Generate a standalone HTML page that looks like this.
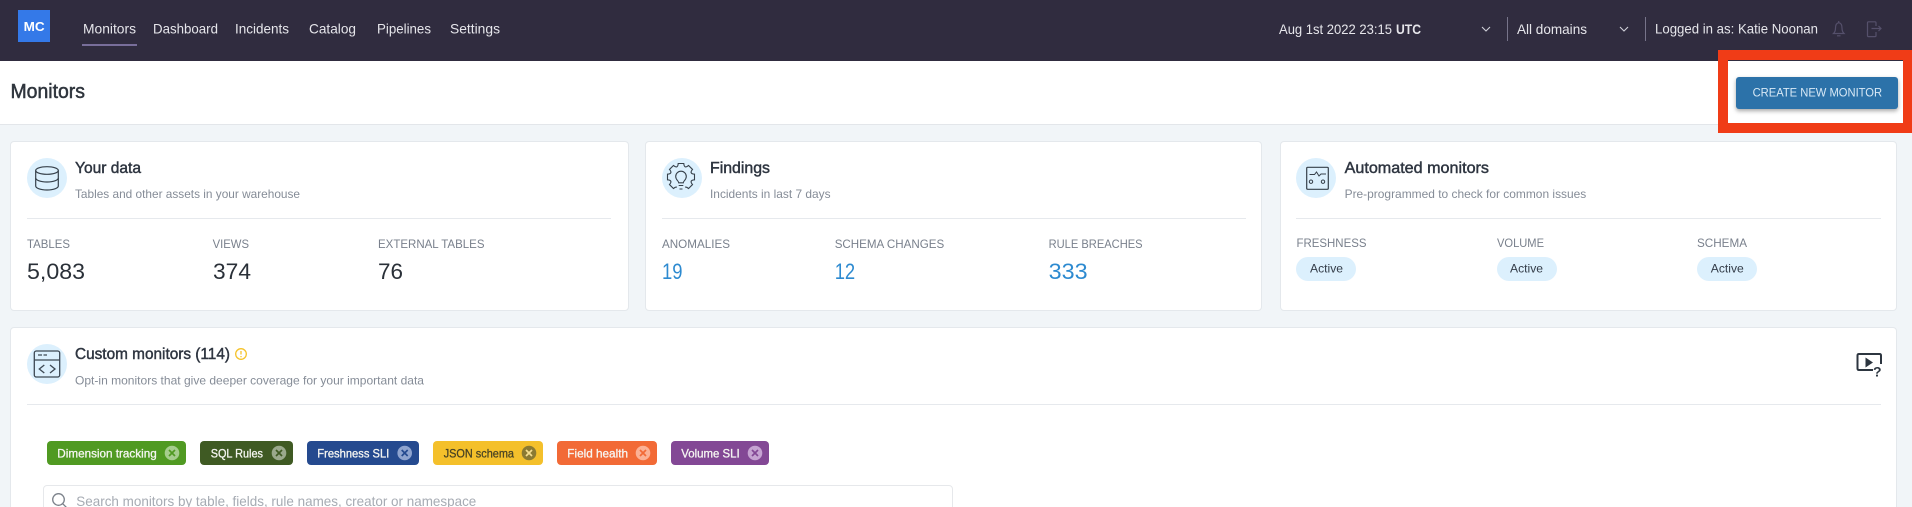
<!DOCTYPE html>
<html lang="en">
<head>
<meta charset="utf-8">
<title>Monitors</title>
<style>
html,body{margin:0;padding:0;width:1912px;height:507px;overflow:hidden;background:#f1f5f8;font-family:"Liberation Sans",sans-serif}
#w{position:relative;width:1912px;height:507px;overflow:hidden;background:#f1f5f8}
.a{position:absolute;box-sizing:border-box}
.card{background:#fff;border:1px solid #e4e8ec;border-radius:4px}
.line{background:#e6e9ed;height:1px}
.chip{border-radius:4px;height:24px;top:441px}
.pill{background:#dcf0fd;border-radius:12px;height:24px;width:60px;top:257px}
svg{position:absolute;left:0;top:0}
text{font-family:"Liberation Sans",sans-serif}
.nav{font-size:14px;fill:#e6e6eb}
.ttl{font-size:16px;fill:#2e3540;stroke:#2e3540;stroke-width:.45px}
.sub{font-size:12px;fill:#858c97}
.lbl{font-size:12px;fill:#79808c}
.val{font-size:22px;fill:#2a3038}
.blu{font-size:22px;fill:#2d8ad0}
.act{font-size:12px;fill:#333c48}
.chp{font-size:12px;fill:#f6f6f2;stroke:#f6f6f2;stroke-width:.3px}
</style>
</head>
<body>
<div id="w">
<div class="a" style="left:0;top:0;width:1912px;height:61px;background:#302c3f"></div>
<div class="a" style="left:18px;top:10px;width:32px;height:32px;background:#3479e8"></div>
<div class="a" style="left:82px;top:44px;width:55px;height:2px;background:#786e9a"></div>
<div class="a" style="left:1507px;top:17px;width:1px;height:24px;background:#77748a"></div>
<div class="a" style="left:1645px;top:17px;width:1px;height:24px;background:#77748a"></div>

<div class="a" style="left:0;top:61px;width:1912px;height:64px;background:#fff;border-bottom:1px solid #e3e6ea"></div>
<div class="a" style="left:1736px;top:77px;width:162px;height:32px;background:#2c72a9;border-radius:3px;box-shadow:0 2px 4px rgba(0,0,0,.35)"></div>
<div class="a" style="left:1718px;top:50px;width:194px;height:83px;border:solid #f03c17;border-width:10px 9px 10px 10px"></div>

<div class="a card" style="left:10px;top:141px;width:619px;height:170px"></div>
<div class="a card" style="left:645px;top:141px;width:617px;height:170px"></div>
<div class="a card" style="left:1280px;top:141px;width:617px;height:170px"></div>
<div class="a card" style="left:10px;top:327px;width:1887px;height:200px"></div>

<div class="a" style="left:27px;top:158px;width:40px;height:40px;border-radius:50%;background:#dcf0fd"></div>
<div class="a" style="left:662px;top:158px;width:40px;height:40px;border-radius:50%;background:#dcf0fd"></div>
<div class="a" style="left:1296px;top:158px;width:40px;height:40px;border-radius:50%;background:#dcf0fd"></div>
<div class="a" style="left:27px;top:344px;width:40px;height:40px;border-radius:50%;background:#dcf0fd"></div>

<div class="a line" style="left:27px;top:218px;width:584px"></div>
<div class="a line" style="left:662px;top:218px;width:584px"></div>
<div class="a line" style="left:1296px;top:218px;width:585px"></div>
<div class="a line" style="left:27px;top:404px;width:1854px"></div>

<div class="a pill" style="left:1296px"></div>
<div class="a pill" style="left:1497px"></div>
<div class="a pill" style="left:1697px"></div>

<div class="a chip" style="left:47px;width:139px;background:#509a22"></div>
<div class="a chip" style="left:200px;width:93px;background:#3f5a23"></div>
<div class="a chip" style="left:307px;width:112px;background:#254a8f"></div>
<div class="a chip" style="left:433px;width:110px;background:#f4c02b"></div>
<div class="a chip" style="left:557px;width:100px;background:#f26a36"></div>
<div class="a chip" style="left:671px;width:98px;background:#834895"></div>

<div class="a" style="left:43px;top:485px;width:910px;height:40px;background:#fff;border:1px solid #e6e8eb;border-radius:4px"></div>

<svg width="1912" height="507" viewBox="0 0 1912 507" xmlns="http://www.w3.org/2000/svg">
<text x="23.700" y="31" font-weight="700" fill="#fff" textLength="21" lengthAdjust="spacingAndGlyphs" style="font-size:13px">MC</text>
<text class="nav" x="83" y="33.500" textLength="53" lengthAdjust="spacingAndGlyphs">Monitors</text>
<text class="nav" x="153" y="33.500" textLength="65" lengthAdjust="spacingAndGlyphs">Dashboard</text>
<text class="nav" x="235" y="33.500" textLength="54" lengthAdjust="spacingAndGlyphs">Incidents</text>
<text class="nav" x="309" y="33.500" textLength="47" lengthAdjust="spacingAndGlyphs">Catalog</text>
<text class="nav" x="377" y="33.500" textLength="54" lengthAdjust="spacingAndGlyphs">Pipelines</text>
<text class="nav" x="450" y="33.500" textLength="50" lengthAdjust="spacingAndGlyphs">Settings</text>
<text class="nav" x="1279" y="34" textLength="113" lengthAdjust="spacingAndGlyphs">Aug 1st 2022 23:15</text>
<text class="nav" x="1396" y="34" font-weight="700" textLength="25" lengthAdjust="spacingAndGlyphs">UTC</text>
<text class="nav" x="1517" y="34" textLength="70" lengthAdjust="spacingAndGlyphs">All domains</text>
<text class="nav" x="1655" y="33.500" textLength="163" lengthAdjust="spacingAndGlyphs">Logged in as: Katie Noonan</text>

<g fill="none" stroke="#cfd0d8" stroke-width="1.100">
<path d="M1482 27l4 4 4-4"/><path d="M1620 27l4 4 4-4"/>
</g>
<g fill="none" stroke="#55506b" stroke-width="1.200">
<path d="M1833.500 33.500h10.500c-1.600-1.500-2-3-2-5.500 0-3-1.300-5-3.200-5.300-2 .3-3.300 2.300-3.300 5.300 0 2.500-.4 4-2 5.500z"/>
<path d="M1838.700 21v1.500M1837 35.800h3.500"/>
<path d="M1876 26v-3.200q0-1-1-1h-6.500q-1 0-1 1v12.800q0 1 1 1h6.500q1 0 1-1v-3.600"/>
<path d="M1871.500 28.500h9.500M1878.500 26l2.500 2.500-2.500 2.500"/>
</g>

<text x="10.500" y="98" font-size="20" fill="#2f353d" stroke="#2f353d" stroke-width=".5" textLength="74.500" lengthAdjust="spacingAndGlyphs">Monitors</text>
<text x="1752.600" y="96.500" font-size="12" fill="#d8e9f6" textLength="129.500" lengthAdjust="spacingAndGlyphs">CREATE NEW MONITOR</text>

<!-- Card 1 -->
<g fill="none" stroke="#36404a" stroke-width="1.200">
<ellipse cx="47" cy="170.500" rx="11.300" ry="3.800"/>
<path d="M35.700 170.500v15.500c0 2.200 5 4 11.300 4s11.300-1.800 11.300-4v-15.500"/>
<path d="M35.700 178c0 2.200 5 4 11.300 4s11.300-1.800 11.300-4"/>
</g>
<text class="ttl" x="75" y="173" textLength="66" lengthAdjust="spacingAndGlyphs">Your data</text>
<text class="sub" x="75" y="198" textLength="225" lengthAdjust="spacingAndGlyphs">Tables and other assets in your warehouse</text>
<text class="lbl" x="27" y="248" textLength="43" lengthAdjust="spacingAndGlyphs">TABLES</text>
<text class="lbl" x="212.600" y="248" textLength="36.400" lengthAdjust="spacingAndGlyphs">VIEWS</text>
<text class="lbl" x="378" y="248" textLength="106.500" lengthAdjust="spacingAndGlyphs">EXTERNAL TABLES</text>
<text class="val" x="27" y="279" textLength="58" lengthAdjust="spacingAndGlyphs">5,083</text>
<text class="val" x="213" y="279" textLength="38" lengthAdjust="spacingAndGlyphs">374</text>
<text class="val" x="378" y="279" textLength="25" lengthAdjust="spacingAndGlyphs">76</text>

<!-- Card 2 -->
<g fill="none" stroke="#36404a" stroke-width="1.100" transform="translate(681 177)">
<path id="t" d="M-4.400-10.200Q-3-10.400-2.800-13.500H2.800Q3-10.400 4.400-10.200"/>
<use href="#t" transform="rotate(45)"/><use href="#t" transform="rotate(90)"/><use href="#t" transform="rotate(135)"/>
<use href="#t" transform="rotate(-45)"/><use href="#t" transform="rotate(-90)"/><use href="#t" transform="rotate(-135)"/>
<path d="M-2.300 5.800c0-2-3-2.800-3-6.300a5.300 5.300 0 0 1 10.600 0c0 3.500-3 4.300-3 6.300z"/>
<path d="M-2.300 8.500h4.600M-1.500 12h3"/>
</g>
<text class="ttl" x="710" y="173" textLength="60" lengthAdjust="spacingAndGlyphs">Findings</text>
<text class="sub" x="710" y="198" textLength="120.600" lengthAdjust="spacingAndGlyphs">Incidents in last 7 days</text>
<text class="lbl" x="662" y="248" textLength="68" lengthAdjust="spacingAndGlyphs">ANOMALIES</text>
<text class="lbl" x="834.700" y="248" textLength="109.500" lengthAdjust="spacingAndGlyphs">SCHEMA CHANGES</text>
<text class="lbl" x="1048.600" y="248" textLength="94" lengthAdjust="spacingAndGlyphs">RULE BREACHES</text>
<text class="blu" x="662" y="279" textLength="20.500" lengthAdjust="spacingAndGlyphs">19</text>
<text class="blu" x="834.700" y="279" textLength="20.500" lengthAdjust="spacingAndGlyphs">12</text>
<text class="blu" x="1048.600" y="279" textLength="39" lengthAdjust="spacingAndGlyphs">333</text>

<!-- Card 3 -->
<g fill="none" stroke="#36404a" stroke-width="1.200">
<rect x="1306.700" y="167.300" width="21.600" height="22" rx="1"/>
<path d="M1309.500 174.500h5l2-2.500 2.500 4 2-2h5" stroke-width="1"/>
<circle cx="1311" cy="181.700" r="1.700" stroke-width="1"/>
<circle cx="1323" cy="181.700" r="1.700" stroke-width="1"/>
</g>
<text class="ttl" x="1344.600" y="173" textLength="144.400" lengthAdjust="spacingAndGlyphs">Automated monitors</text>
<text class="sub" x="1344.600" y="198" textLength="241.700" lengthAdjust="spacingAndGlyphs">Pre-programmed to check for common issues</text>
<text class="lbl" x="1296.500" y="247" textLength="70" lengthAdjust="spacingAndGlyphs">FRESHNESS</text>
<text class="lbl" x="1497" y="247" textLength="47" lengthAdjust="spacingAndGlyphs">VOLUME</text>
<text class="lbl" x="1697" y="247" textLength="50" lengthAdjust="spacingAndGlyphs">SCHEMA</text>
<text class="act" x="1310" y="272.500" textLength="33" lengthAdjust="spacingAndGlyphs">Active</text>
<text class="act" x="1510" y="272.500" textLength="33" lengthAdjust="spacingAndGlyphs">Active</text>
<text class="act" x="1710.800" y="272.500" textLength="33" lengthAdjust="spacingAndGlyphs">Active</text>

<!-- Custom monitors -->
<g fill="none" stroke="#3d4853" stroke-width="1.300">
<rect x="34.300" y="351" width="25.400" height="26" rx="2"/>
<path d="M34.300 360h25.400M38 355h4M43.500 355h3.500"/>
<path d="M44.300 365l-5 4 5 4M50 365l5 4-5 4"/>
</g>
<text class="ttl" x="75" y="359" textLength="155" lengthAdjust="spacingAndGlyphs">Custom monitors (114)</text>
<g fill="none" stroke="#f5c32c" stroke-width="1.300">
<circle cx="241" cy="354" r="5.300"/>
<path d="M241 351v3.500M241 356v1.200"/>
</g>
<text class="sub" x="75" y="384.300" textLength="349" lengthAdjust="spacingAndGlyphs">Opt-in monitors that give deeper coverage for your important data</text>

<g fill="none" stroke="#2d3640" stroke-width="2">
<path d="M1873 370h-14q-1.500 0-1.500-1.500v-13q0-1.500 1.500-1.500h20.500q1.500 0 1.500 1.500v8.500"/>
</g>
<path d="M1865.500 357.500v10l7.500-5z" fill="#2d3640"/>
<text x="1873" y="376.500" font-size="14" font-weight="700" fill="#2d3640">?</text>

<text class="chp" x="57.300" y="457.300" textLength="99.400" lengthAdjust="spacingAndGlyphs">Dimension tracking</text>
<text class="chp" x="210.700" y="457.300" textLength="52.300" lengthAdjust="spacingAndGlyphs">SQL Rules</text>
<text class="chp" x="317.300" y="457.300" textLength="72" lengthAdjust="spacingAndGlyphs">Freshness SLI</text>
<text class="chp" x="443.700" y="457.300" textLength="70.300" lengthAdjust="spacingAndGlyphs" style="fill:#4a4424;stroke:#4a4424">JSON schema</text>
<text class="chp" x="567.300" y="457.300" textLength="60.700" lengthAdjust="spacingAndGlyphs">Field health</text>
<text class="chp" x="681.300" y="457.300" textLength="58.400" lengthAdjust="spacingAndGlyphs">Volume SLI</text>

<g stroke-width="1.700">
<circle cx="172" cy="453" r="7.300" fill="#a5cd8d"/><path d="M169 450l6 6M175 450l-6 6" stroke="#509a22"/>
<circle cx="279" cy="453" r="7.300" fill="#9aa98c"/><path d="M276 450l6 6M282 450l-6 6" stroke="#3f5a23"/>
<circle cx="404.700" cy="453" r="7.300" fill="#8fa4cf"/><path d="M401.700 450l6 6M407.700 450l-6 6" stroke="#254a8f"/>
<circle cx="529" cy="453" r="7.300" fill="#8b7a32"/><path d="M526 450l6 6M532 450l-6 6" stroke="#f4dd90"/>
<circle cx="643" cy="453" r="7.300" fill="#fbb195"/><path d="M640 450l6 6M646 450l-6 6" stroke="#f26a36"/>
<circle cx="755" cy="453" r="7.300" fill="#c6a3d2"/><path d="M752 450l6 6M758 450l-6 6" stroke="#834895"/>
</g>

<g fill="none" stroke="#7b818a" stroke-width="1.300">
<circle cx="58.500" cy="499.500" r="5.800"/><path d="M62.700 503.700l3.800 3.800"/>
</g>
<text x="76.300" y="506" font-size="14" fill="#a6abb3" textLength="400" lengthAdjust="spacingAndGlyphs">Search monitors by table, fields, rule names, creator or namespace</text>
</svg>
</div>
</body>
</html>
